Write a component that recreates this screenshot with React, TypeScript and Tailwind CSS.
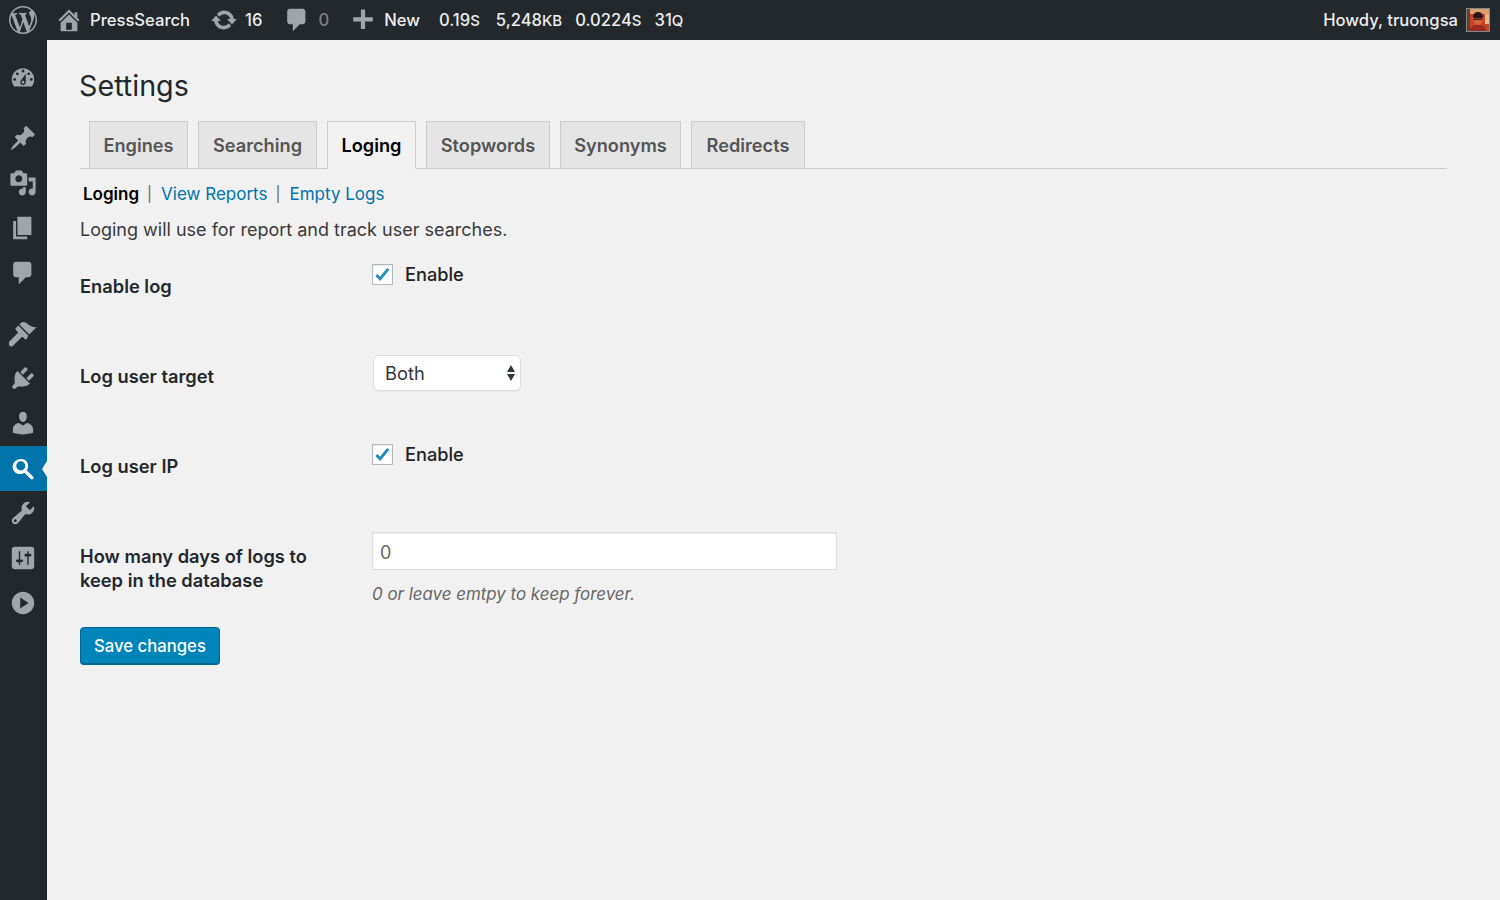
const font = "font-['Inter','Liberation_Sans',sans-serif]";

const icons = {
  wordpress:
    "M20 10c0-5.51-4.49-10-10-10C4.48 0 0 4.49 0 10c0 5.52 4.48 10 10 10 5.51 0 10-4.48 10-10zM7.78 15.37L4.37 6.22c.55-.02 1.17-.08 1.17-.08.5-.06.44-1.13-.06-1.11 0 0-1.45.11-2.37.11-.18 0-.37 0-.58-.01C4.12 2.69 6.87 1.11 10 1.11c2.33 0 4.45.87 6.05 2.34-.68-.11-1.65.39-1.65 1.58 0 .74.45 1.36.9 2.1.35.61.55 1.36.55 2.46 0 1.49-1.4 5-1.4 5l-3.03-8.37c.54-.02.82-.17.82-.17.5-.05.44-1.25-.06-1.22 0 0-1.44.12-2.38.12-.87 0-2.33-.12-2.33-.12-.5-.03-.56 1.2-.06 1.22l.92.08 1.26 3.41zM17.41 10c.24-.64.74-1.87.43-4.25.7 1.29 1.05 2.71 1.05 4.25 0 3.29-1.73 6.24-4.4 7.78.97-2.59 1.94-5.2 2.92-7.78zM6.1 18.09C3.12 16.65 1.11 13.53 1.11 10c0-1.3.23-2.48.72-3.59C3.25 10.3 4.67 14.2 6.1 18.09zm4.03-6.63l2.58 6.98c-.86.29-1.76.45-2.71.45-.79 0-1.57-.11-2.29-.33.81-2.38 1.62-4.74 2.42-7.1z",
  home: "M16 8.5l1.53 1.53-1.06 1.06L10 4.62l-6.47 6.47-1.06-1.06L10 2.5l4 4v-2h2v4zm-6-2.46l6 5.99V18H4v-5.97zM12 17v-5H8v5h4z",
  update:
    "M10.2 3.28c3.53 0 6.43 2.61 6.92 6h2.08l-3.5 4-3.5-4h2.32c-.45-1.97-2.21-3.45-4.32-3.45-1.45 0-2.73.71-3.54 1.78L4.95 5.66C6.23 4.2 8.11 3.28 10.2 3.28zm-.4 13.44c-3.52 0-6.43-2.61-6.92-6H.8l3.5-4c1.17 1.33 2.33 2.67 3.5 4H5.48c.45 1.97 2.21 3.45 4.32 3.45 1.45 0 2.73-.71 3.54-1.78l1.71 1.95c-1.28 1.46-3.15 2.38-5.25 2.38z",
  comment: "M5 2h9c1.1 0 2 .9 2 2v7c0 1.1-.9 2-2 2h-2l-5 5v-5H5c-1.1 0-2-.9-2-2V4c0-1.1.9-2 2-2z",
  plus: "M17 8v3h-5.5v5.5h-3V11H3V8h5.5V2.500h3V8z",
  dashboard:
    "M3.76 16h12.48c1.1-1.37 1.76-3.11 1.76-5 0-4.42-3.58-8-8-8s-8 3.58-8 8c0 1.89.66 3.63 1.76 5zM10 4c.55 0 1 .45 1 1s-.45 1-1 1-1-.45-1-1 .45-1 1-1zM6 6c.55 0 1 .45 1 1s-.45 1-1 1-1-.45-1-1 .45-1 1-1zm8 0c.55 0 1 .45 1 1s-.45 1-1 1-1-.45-1-1 .45-1 1-1zm-5.37 5.55L12 7v6c0 1.1-.9 2-2 2s-2-.9-2-2c0-.57.24-1.08.63-1.45zM4 10c.55 0 1 .45 1 1s-.45 1-1 1-1-.45-1-1 .45-1 1-1zm12 0c.55 0 1 .45 1 1s-.45 1-1 1-1-.45-1-1 .45-1 1-1zm-5 3c0-.55-.45-1-1-1s-1 .45-1 1 .45 1 1 1 1-.45 1-1z",
  post: "M10.44 3.02l1.82-1.82 6.36 6.35-1.83 1.82c-1.05-.68-2.48-.57-3.41.36l-.75.75c-.92.93-1.04 2.35-.35 3.41l-1.83 1.82-2.41-2.41-2.8 2.79c-.42.42-3.38 2.71-3.8 2.29s1.86-3.39 2.28-3.81l2.79-2.79L4.1 9.36l1.83-1.82c1.05.69 2.48.57 3.4-.36l.75-.75c.93-.92 1.05-2.35.36-3.41z",
  media:
    "M13 11V4c0-.55-.45-1-1-1h-1.67L9 1H5L3.67 3H2c-.55 0-1 .45-1 1v7c0 .55.45 1 1 1h10c.55 0 1-.45 1-1zM7 4.500c1.380 0 2.500 1.120 2.500 2.500S8.380 9.500 7 9.500 4.500 8.380 4.500 7 5.620 4.500 7 4.500zM14 6h5v10.500c0 1.380-1.120 2.500-2.500 2.500S14 17.880 14 16.500s1.120-2.500 2.500-2.500c.170 0 .340.020.500.050V9h-3V6zm-4 8.050V13h2v3.500c0 1.380-1.120 2.500-2.500 2.500S7 17.880 7 16.500 8.120 14 9.500 14c.170 0 .340.020.500.050z",
  page: "M6 15V2h10v13H6zm-1 1h8v2H3V5h2v11z",
  appearance:
    "M14.480 11.060L7.410 3.990l1.500-1.500c.500-.560 2.300-.470 3.510.320 1.210.800 1.430 1.280 2.910 2.100 1.180.640 2.450 1.260 4.450.850zm-.710.710L6.700 4.700 4.930 6.470c-.390.390-.390 1.020 0 1.410l1.060 1.060c.390.390.390 1.030 0 1.420-.600.600-6.370 6.340-6.370 6.340-.390.390-.390 1.020 0 1.410l1.410 1.410c.390.390 1.020.390 1.410 0 0 0 5.740-5.770 6.340-6.370.390-.390 1.030-.390 1.420 0l1.060 1.060c.390.390 1.020.390 1.410 0z",
  plugins:
    "M13.110 4.360L9.870 7.600 8 5.730l3.240-3.240c.350-.340 1.050-.200 1.560.320.520.510.660 1.210.310 1.550zm-8 1.770l.910-1.120 9.010 9.010-1.190.840c-.710.710-2.630 1.160-3.820 1.160H6.140L4.900 17.260c-.590.590-1.540.590-2.120 0-.590-.580-.590-1.530 0-2.120l1.240-1.240v-3.880c0-1.130.400-3.190 1.090-3.890zm7.260 3.970l3.240-3.240c.340-.350 1.040-.210 1.550.310.520.510.660 1.210.310 1.550l-3.240 3.250z",
  users:
    "M10 9.250c-2.270 0-2.730-3.440-2.730-3.440C7 4.020 7.820 2 9.970 2c2.160 0 2.980 2.020 2.710 3.810 0 0-.410 3.440-2.680 3.440zm0 2.570L12.720 10c2.390 0 4.520 2.330 4.520 4.530v2.490s-3.650 1.130-7.240 1.130c-3.650 0-7.240-1.130-7.240-1.130v-2.490c0-2.250 1.940-4.480 4.470-4.480z",
  search:
    "M12.140 4.780c1.860 1.860 2.030 4.780.520 6.830l4.610 4.610c.470.470.470 1.230 0 1.700-.470.470-1.230.470-1.700 0l-4.610-4.610c-2.050 1.510-4.970 1.340-6.830-.520-2.050-2.050-2.050-5.380 0-7.440 2.050-2.050 5.960-2.620 8.010-.570zm-1.410 1.410c-1.270-1.270-3.330-1.270-4.600 0-1.270 1.270-1.270 3.330 0 4.600 1.270 1.270 3.330 1.270 4.600 0 1.270-1.270 1.270-3.330 0-4.600z",
  tools:
    "M16.680 9.770c-1.340 1.340-3.300 1.670-4.950.990l-5.410 6.520c-.990.990-2.590.990-3.580 0s-.990-2.590 0-3.570l6.520-5.420c-.680-1.650-.350-3.610.990-4.950 1.280-1.280 3.120-1.620 4.720-1.060l-2.890 2.890 2.820 2.820 2.860-2.870c.530 1.580.180 3.390-1.080 4.650zM3.810 16.210c.400.390 1.040.390 1.430 0 .400-.400.400-1.040 0-1.430-.390-.400-1.030-.400-1.430 0-.390.390-.390 1.030 0 1.430z",
  settings:
    "M18 16V4c0-1.100-.900-2-2-2H4c-1.100 0-2 .900-2 2v12c0 1.100.900 2 2 2h12c1.100 0 2-.900 2-2zM8 11h1c.550 0 1 .450 1 1s-.450 1-1 1H8v1.500c0 .280-.220.500-.500.500s-.500-.220-.500-.500V13H6c-.550 0-1-.450-1-1s.450-1 1-1h1V5.500c0-.280.220-.500.500-.500s.500.220.500.500V11zm5-2h-1c-.550 0-1-.450-1-1s.450-1 1-1h1V5.500c0-.280.220-.500.500-.500s.500.220.500.500V7h1c.550 0 1 .450 1 1s-.450 1-1 1h-1v5.500c0 .280-.220.500-.500.500s-.500-.220-.500-.500V9z",
  play: "M10 2c4.420 0 8 3.580 8 8s-3.580 8-8 8-8-3.580-8-8 3.580-8 8-8zm-2 12l6-4-6-4v8z",
};

function Dashicon({ d, className }: { d: string; className: string }) {
  return (
    <svg viewBox="0 0 20 20" className={className} fill="currentColor" aria-hidden="true">
      <path d={d} />
    </svg>
  );
}

const menuGroups = [
  [icons.dashboard],
  [icons.post, icons.media, icons.page, icons.comment],
  [icons.appearance, icons.plugins, icons.users, icons.search, icons.tools, icons.settings, icons.play],
];

const tabs = [
  { label: "Engines", width: "w-[99px]" },
  { label: "Searching", width: "w-[119px]" },
  { label: "Loging", width: "w-[89px]", active: true },
  { label: "Stopwords", width: "w-[124px]" },
  { label: "Synonyms", width: "w-[121px]" },
  { label: "Redirects", width: "w-[114px]" },
];

function Unit({ children }: { children: string }) {
  return <span className="text-[15px]">{children}</span>;
}

function TopBar() {
  return (
    <header className="flex h-10 shrink-0 items-center bg-[#23282d] text-[16.600px] font-medium text-[#eeeeee]">
      <Dashicon d={icons.wordpress} className="ml-[9px] -mt-px h-7 w-7 text-[#a0a5aa]" />
      <Dashicon d={icons.home} className="ml-[18px] -mt-px h-7 w-7 text-[#a0a5aa]" />
      <span className="ml-[7px]">PressSearch</span>
      <Dashicon d={icons.update} className="ml-[20px] -mt-px h-7 w-7 text-[#a0a5aa]" />
      <span className="ml-[7px]">16</span>
      <Dashicon d={icons.comment} className="ml-[21px] -mt-px h-7 w-7 text-[#a0a5aa]" />
      <span className="ml-[7px] text-[#7d8185]">0</span>
      <Dashicon d={icons.plus} className="ml-[20px] -mt-px h-7 w-7 text-[#a0a5aa]" />
      <span className="ml-[7px]">New</span>
      <span className="ml-[19px]">0.19<Unit>S</Unit></span>
      <span className="ml-[16px]">5,248<Unit>KB</Unit></span>
      <span className="ml-[13px]">0.0224<Unit>S</Unit></span>
      <span className="ml-[13px]">31<Unit>Q</Unit></span>
      <span className="ml-auto">Howdy, truongsa</span>
      <Avatar />
    </header>
  );
}

function Avatar() {
  return (
    <svg viewBox="0 0 24 24" className="ml-[8px] mr-[10px] -mt-px h-[24px] w-[24px]" aria-hidden="true">
      <rect width="24" height="24" fill="#82878c" />
      <rect x="1" y="1" width="22" height="22" fill="#c2452a" />
      <rect x="1" y="1" width="22" height="5" fill="#dba06c" />
      <rect x="1" y="1" width="3" height="22" fill="#6e3a2a" />
      <rect x="19" y="6" width="4" height="10" fill="#e8b88a" />
      <path d="M7 9c0-3 2-5 5-5s5 2 5 5l-1 1H8z" fill="#2a1712" />
      <path d="M8 10h8v4c0 2-2 3-4 3s-4-1-4-3z" fill="#d9603c" />
      <rect x="8" y="10.500" width="8" height="1.500" fill="#3a1d15" />
      <path d="M4 23c0-4 3-6 8-6s8 2 8 6z" fill="#9c2a1e" />
    </svg>
  );
}

function Sidebar() {
  return (
    <nav className="w-[47px] shrink-0 bg-[#23282d] pt-4">
      {menuGroups.map((group, i) => (
        <div key={i} className="mb-[15px]">
          {group.map((d) => {
            const current = d === icons.search;
            return (
              <div
                key={d}
                className={`relative flex h-[45px] items-center justify-center pb-px pr-px ${current ? "bg-[#0073aa] text-white" : "text-[#a0a5aa]"}`}
              >
                <Dashicon d={d} className="h-7 w-7" />
                {current && (
                  <span className="absolute right-0 top-[15px] border-y-[8px] border-r-[5px] border-y-transparent border-r-[#f1f1f1]" />
                )}
              </div>
            );
          })}
        </div>
      ))}
    </nav>
  );
}

function Checkbox() {
  return (
    <span className="flex h-[21px] w-[21px] items-center justify-center border border-[#b4b9be] bg-white shadow-[inset_0_1px_2px_rgba(0,0,0,0.1)]">
      <svg viewBox="0 0 20 20" className="h-[19px] w-[19px] text-[#1e8cbe]" fill="none" stroke="currentColor" strokeWidth="3" aria-hidden="true">
        <path d="M3.500 10.500l4 4L16 4" />
      </svg>
    </span>
  );
}

function EnableField() {
  return (
    <label className="flex items-center gap-[12px] text-[18.200px] font-medium leading-[21px] text-[#222222]">
      <Checkbox />
      Enable
    </label>
  );
}

function Row({ label, controlTop, height = "h-[90px]", children }: {
  label: React.ReactNode;
  controlTop: string;
  height?: string;
  children: React.ReactNode;
}) {
  return (
    <div className={`flex ${height}`}>
      <div className="w-[292px] shrink-0 pt-[28px] text-[18.300px] font-semibold leading-[24px] text-[#23282d]">{label}</div>
      <div className={controlTop}>{children}</div>
    </div>
  );
}

export default function App() {
  return (
    <div className={`flex min-h-screen flex-col bg-[#f1f1f1] ${font}`}>
      <TopBar />
      <div className="flex flex-1">
        <Sidebar />
        <main className="min-w-0 flex-1 pl-[33px] pr-[53px]">
          <h1 className="-ml-px pt-[28px] text-[28.700px] font-normal leading-[36px] text-[#23282d]">Settings</h1>
          <div className="mt-[17px] flex gap-[10px] border-b border-[#cccccc] pl-[9px]">
            {tabs.map((tab) => (
              <a
                key={tab.label}
                className={`-mb-px flex h-[48px] items-center justify-center border pt-px text-[18.200px] font-semibold ${tab.width} ${
                  tab.active
                    ? "border-[#cccccc] border-b-[#f1f1f1] bg-[#f1f1f1] text-black"
                    : "border-[#cccccc] bg-[#e5e5e5] text-[#555555]"
                }`}
              >
                {tab.label}
              </a>
            ))}
          </div>
          <div className="mt-[12px] flex h-[26px] items-center pl-[3px] text-[17px] leading-[26px]">
            <span className="font-semibold text-black">Loging</span>
            <span className="ml-[8px] mr-[9px] text-[15px] text-[#666666]">|</span>
            <a className="text-[#0073aa]">View Reports</a>
            <span className="ml-[8px] mr-[9px] text-[15px] text-[#666666]">|</span>
            <a className="text-[#0073aa]">Empty Logs</a>
          </div>
          <p className="mt-[10px] text-[18px] leading-[26px] text-[#3a3a3a]">Loging will use for report and track user searches.</p>
          <div className="mt-[3px]">
            <Row label="Enable log" controlTop="pt-[18px]">
              <EnableField />
            </Row>
            <Row label="Log user target" controlTop="pt-[19px] pl-px">
              <div className="relative flex h-[36px] w-[148px] items-center rounded-[6px] border border-[#dddddd] bg-white pl-[11px] pt-[2px] text-[18.300px] text-[#32373c] shadow-[0_1px_1px_rgba(0,0,0,0.04)]">
                Both
                <span className="absolute right-[5px] top-[9px] flex flex-col gap-[2px]">
                  <span className="border-x-[4px] border-b-[7px] border-x-transparent border-b-[#32373c]" />
                  <span className="border-x-[4px] border-t-[7px] border-x-transparent border-t-[#32373c]" />
                </span>
              </div>
            </Row>
            <Row label="Log user IP" controlTop="pt-[18px]">
              <EnableField />
            </Row>
            <Row
              label={<>How many days of logs to<br />keep in the database</>}
              controlTop="pt-[16px]"
              height="h-[96px]"
            >
              <div className="flex h-[38px] w-[465px] items-center border border-[#dddddd] bg-white px-[7px] pt-[2px] text-[18px] text-[#666666] shadow-[inset_0_1px_2px_rgba(0,0,0,0.07)]">0</div>
              <p className="mt-[11px] text-[16.900px] italic leading-[26px] text-[#666666]">0 or leave emtpy to keep forever.</p>
            </Row>
          </div>
          <button className="mt-[15px] flex h-[37px] w-[140px] items-center justify-center rounded-[4px] border border-[#006799] bg-[#0085ba] pt-[2px] text-[16.700px] font-medium text-white shadow-[0_1px_0_#006799]">
            Save changes
          </button>
        </main>
      </div>
    </div>
  );
}
